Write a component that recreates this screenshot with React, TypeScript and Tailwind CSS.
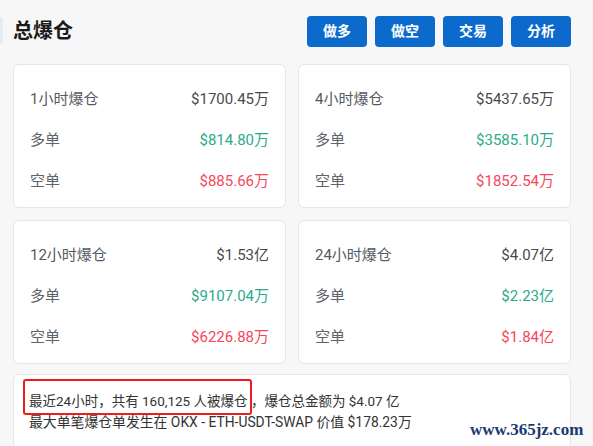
import React from "react";

const font = { fontFamily: 'Roboto, "Noto Sans CJK SC", sans-serif' };

type Row = { label: string; total: string; long: string; short: string };

const cards: Row[] = [
  { label: "1小时爆仓", total: "$1700.45万", long: "$814.80万", short: "$885.66万" },
  { label: "4小时爆仓", total: "$5437.65万", long: "$3585.10万", short: "$1852.54万" },
  { label: "12小时爆仓", total: "$1.53亿", long: "$9107.04万", short: "$6226.88万" },
  { label: "24小时爆仓", total: "$4.07亿", long: "$2.23亿", short: "$1.84亿" },
];

function Card({ c }: { c: Row }) {
  return (
    <div className="bg-white border border-[#e6e6e6] rounded-[6px] h-[144px] px-[16px] pt-[24px] flex flex-col gap-[21px] text-[15px] leading-[20px]">
      <div className="flex justify-between">
        <span className="text-[#555a62]">{c.label}</span>
        <span className="text-[#4a4a4a]">{c.total}</span>
      </div>
      <div className="flex justify-between">
        <span className="text-[#5f636a]">多单</span>
        <span className="text-[#2bab8a]">{c.long}</span>
      </div>
      <div className="flex justify-between">
        <span className="text-[#5f636a]">空单</span>
        <span className="text-[#f5475a]">{c.short}</span>
      </div>
    </div>
  );
}

export default function App() {
  const btns = ["做多", "做空", "交易", "分析"];
  return (
    <div className="relative w-[593px] h-[446px] overflow-hidden bg-[#f7f7f7]" style={font}>
      <div className="absolute left-0 top-[17px] w-[3px] h-[27px] rounded-r-[3px] bg-[#e6ecf3]" />
      <div className="pl-[13px] pr-[22px]">
        <div className="flex items-center justify-between pt-[16px] h-[47px]">
          <h1 className="text-[20px] font-bold text-[#1a1a1a] leading-[31px] -mt-[1px]">总爆仓</h1>
          <div className="flex gap-[8px]">
            {btns.map((b) => (
              <button
                key={b}
                className="w-[60px] h-[31px] rounded-[4px] bg-[#0b6acb] text-white text-[14px] font-bold leading-[31px]"
              >
                {b}
              </button>
            ))}
          </div>
        </div>
        <div className="grid grid-cols-2 gap-x-[12px] gap-y-[12px] mt-[17px]">
          {cards.map((c) => (
            <Card key={c.label} c={c} />
          ))}
        </div>
        <div className="relative mt-[10px] bg-white border border-[#e6e6e6] rounded-[6px] h-[100px] pl-[15px] pt-[16px] leading-[21px] text-[#333]">
          <div className="text-[13.5px]">最近24小时，共有 160,125 人被爆仓 ，爆仓总金额为 $4.07 亿</div>
          <div className="text-[13.85px]">最大单笔爆仓单发生在 OKX - ETH-USDT-SWAP 价值 $178.23万</div>
          <div className="absolute left-[9px] top-[4px] w-[229px] h-[36px] border-2 border-[#ee1c1c] rounded-[3px]" />
        </div>
      </div>
      <div
        className="absolute left-[470px] top-[420px] text-[17px] font-bold text-[#1b3a72] leading-[20px]"
        style={{ fontFamily: '"Liberation Serif", serif' }}
      >
        www.365jz.com
      </div>
    </div>
  );
}
